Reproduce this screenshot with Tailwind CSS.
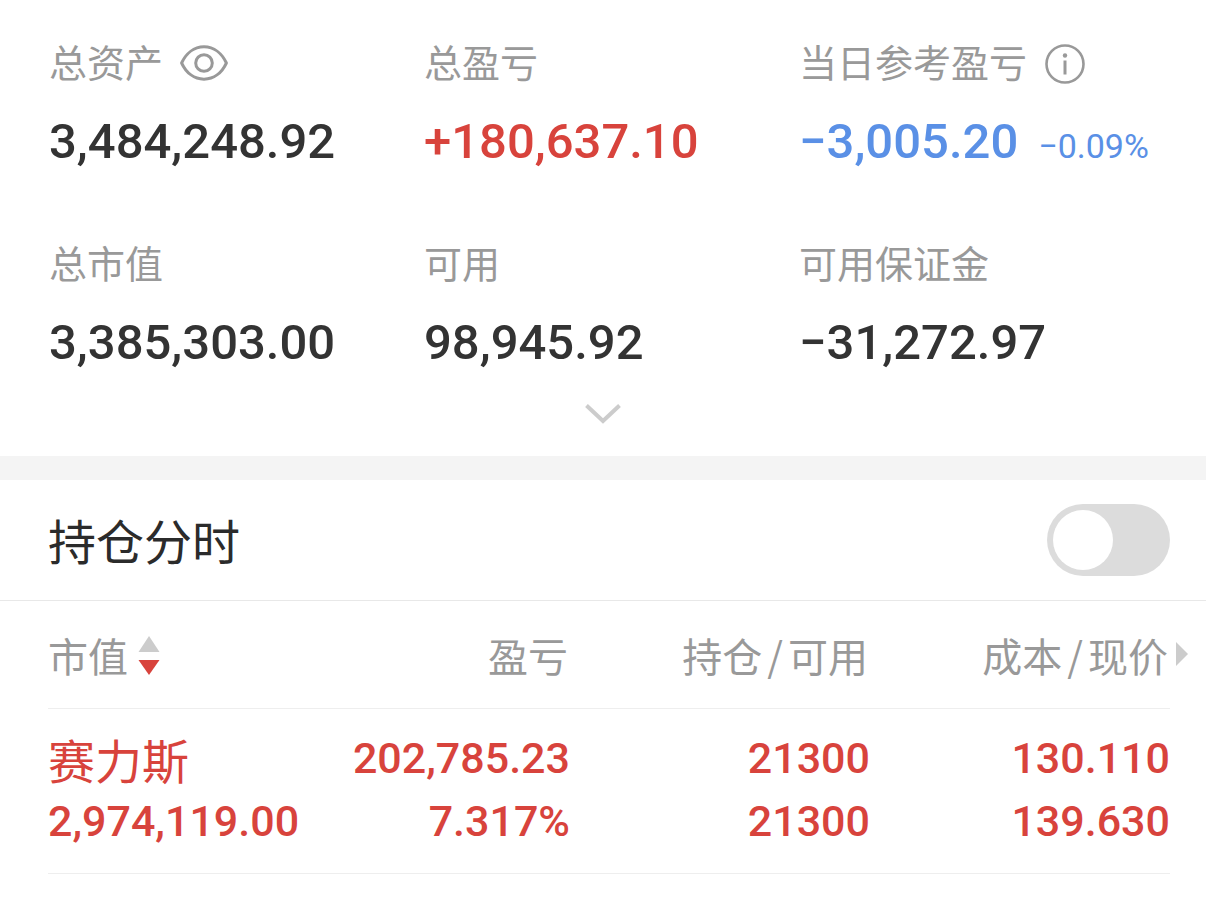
<!DOCTYPE html>
<html lang="zh-CN">
<head>
    <meta charset="UTF-8">
    <meta name="viewport" content="width=device-width, initial-scale=1.0">
    <title>持仓</title>
    <script src="https://cdn.jsdelivr.net/npm/@tailwindcss/browser@4"></script>
</head>
<body class="bg-white text-[#333333] font-['Noto_Sans_CJK_SC',sans-serif]">
    <!-- Account summary -->
    <section class="pt-[37px]">
        <dl class="grid grid-cols-3 gap-y-[68px] pl-[49px] pr-8">
            <div>
                <dt class="flex items-center gap-[17px] text-[38px] leading-12 text-[#999999]">
                    总资产
                    <button type="button" aria-label="隐藏金额">
                        <svg class="block w-12 h-10 overflow-visible" viewBox="0 -1 48 40" fill="none" stroke="#999999" stroke-width="3">
                            <path d="M1.6 21C6 11.500 14 4.800 24 4.800S42 11.500 46.400 21C42 30.500 34 37.200 24 37.200S6 30.500 1.600 21Z" stroke-linejoin="round"/>
                            <circle cx="24" cy="21" r="8.300"/>
                        </svg>
                    </button>
                </dt>
                <dd class="mt-[29px] font-[Roboto] font-medium text-[49px] leading-14">3,484,248.92</dd>
            </div>
            <div>
                <dt class="text-[38px] leading-12 text-[#999999]">总盈亏</dt>
                <dd class="mt-[29px] font-[Roboto] font-medium text-[49px] leading-14 text-[#d8433c]">+180,637.10</dd>
            </div>
            <div>
                <dt class="flex items-center gap-[18px] text-[38px] leading-12 text-[#999999]">
                    当日参考盈亏
                    <button type="button" aria-label="说明">
                        <svg class="block w-10 h-10 overflow-visible" viewBox="0 -2 40 40" fill="none" stroke="#999999" stroke-width="2.6">
                            <circle cx="20" cy="21" r="18.500"/>
                            <path d="M20 17.500V31.500" stroke-width="3"/>
                            <circle cx="20" cy="12.500" r="2.200" fill="#999999" stroke="none"/>
                        </svg>
                    </button>
                </dt>
                <dd class="mt-[29px] flex items-baseline gap-5 font-[Roboto] font-medium text-[49px] leading-14 text-[#5a90e6] whitespace-nowrap">
                    −3,005.20 <span class="text-[34px] leading-none font-normal">−0.09%</span>
                </dd>
            </div>
            <div>
                <dt class="text-[38px] leading-12 text-[#999999]">总市值</dt>
                <dd class="mt-[29px] font-[Roboto] font-medium text-[49px] leading-14">3,385,303.00</dd>
            </div>
            <div>
                <dt class="text-[38px] leading-12 text-[#999999]">可用</dt>
                <dd class="mt-[29px] font-[Roboto] font-medium text-[49px] leading-14">98,945.92</dd>
            </div>
            <div>
                <dt class="text-[38px] leading-12 text-[#999999]">可用保证金</dt>
                <dd class="mt-[29px] font-[Roboto] font-medium text-[49px] leading-14">−31,272.97</dd>
            </div>
        </dl>
        <button type="button" aria-label="展开" class="flex items-center justify-center w-full h-[85px]">
            <svg class="w-9 h-5" viewBox="0 0 36 20" fill="none" stroke="#cccccc" stroke-width="4">
                <path d="M1.500 1.500L18 17L34.500 1.500"/>
            </svg>
        </button>
    </section>

    <div class="h-6 bg-[#f4f4f4]"></div>

    <!-- Intraday switch -->
    <section class="flex items-center justify-between h-[121px] pl-12 pr-9 border-b border-[#e8e8e8]">
        <label for="intraday" class="pb-0.5 text-[48px] leading-16 text-[#2b2b2b]">持仓分时</label>
        <input type="checkbox" role="switch" id="intraday" class="appearance-none w-[123px] h-[72px] p-1.5 rounded-full bg-[#dcdcdc] checked:bg-[#d8433c] before:block before:size-[60px] before:rounded-full before:bg-white checked:before:ml-auto">
    </section>

    <!-- Positions -->
    <section class="pl-12 pr-9">
        <table class="w-full table-fixed text-right">
            <thead class="text-[40px] leading-12 text-[#999999]">
                <tr class="h-[107px] border-b border-[#eeeeee]">
                    <th class="p-0 pt-0.5 font-normal text-left">
                        <button type="button" class="flex items-center gap-2.5">
                            市值
                            <svg class="w-[22px] h-10" viewBox="0 0 22 40">
                                <path d="M11 1L21.500 17H0.500Z" fill="#cccccc"/>
                                <path d="M0.500 25H21.500L11 40Z" fill="#d8433c"/>
                            </svg>
                        </button>
                    </th>
                    <th class="p-0 pt-0.5 pr-0.5 font-normal w-[260px]">盈亏</th>
                    <th class="p-0 pt-0.5 pr-0.5 font-normal w-[300px]">持仓<span class="mx-[5px]">/</span>可用</th>
                    <th class="relative p-0 pt-0.5 pr-0.5 font-normal w-[300px]">
                        成本<span class="mx-[5px]">/</span>现价
                        <svg class="absolute left-full top-1/2 -translate-y-1/2 ml-1.5 w-3 h-6" viewBox="0 0 12 24">
                            <path d="M0 0L12 12L0 24Z" fill="#cccccc"/>
                        </svg>
                    </th>
                </tr>
            </thead>
            <tbody class="font-[Roboto] font-medium text-[43px] leading-[63px] text-[#d8433c]">
                <tr class="h-[165px] border-b border-[#eeeeee]">
                    <td class="p-0 pb-0.5 text-left">
                        <div class="font-['Noto_Sans_CJK_SC',sans-serif] font-normal text-[47px] leading-[63px]">赛力斯</div>
                        <div>2,974,119.00</div>
                    </td>
                    <td class="p-0 pb-0.5">
                        <div>202,785.23</div>
                        <div>7.317%</div>
                    </td>
                    <td class="p-0 pb-0.5">
                        <div>21300</div>
                        <div>21300</div>
                    </td>
                    <td class="p-0 pb-0.5">
                        <div>130.110</div>
                        <div>139.630</div>
                    </td>
                </tr>
            </tbody>
        </table>
    </section>
</body>
</html>
